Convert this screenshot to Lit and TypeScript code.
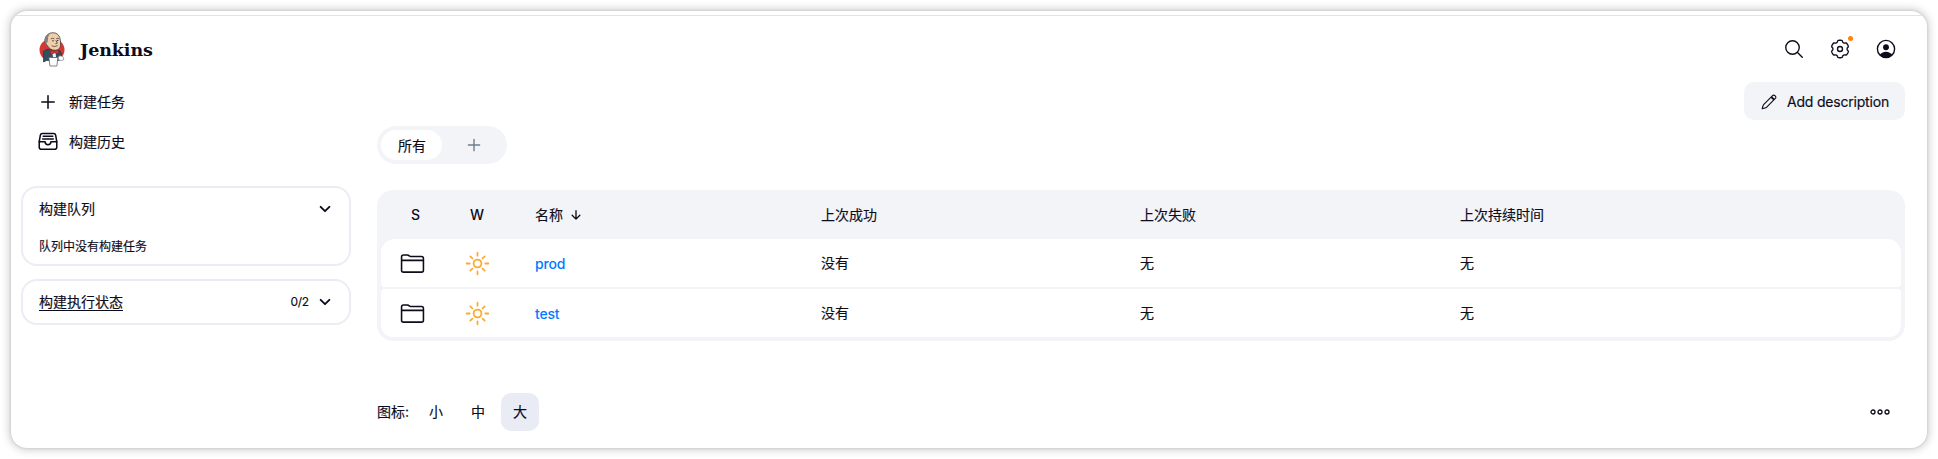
import { LitElement, html, css, svg } from "lit";
import { customElement } from "lit/decorators.js";

const ionicon = (name: string, body: unknown, size = 24) => html`<svg
  class="icon ${name}" width=${size} height=${size} viewBox="0 0 512 512" fill="none"
  stroke="currentColor" stroke-width="32" stroke-linecap="round" stroke-linejoin="round">${body}</svg>`;

const plus = (size: number) => ionicon("plus", svg`<path stroke-width="36" d="M256 112v288M400 256H112"/>`, size);
const chevron = () => ionicon("chevron", svg`<path stroke-width="48" d="M144 200l112 112 112-112"/>`, 20);

const archive = () => ionicon("archive", svg`
  <g stroke-width="36"><path d="M384 56H128c-26 0-46 14-50 40L52 250v128a48.14 48.14 0 0048 48h312a48.14 48.14 0 0048-48V250L434 96c-4-27-24-40-50-40z"/>
  <path d="M52 250h136M324 250h136M188 250a68 68 0 00136 0M144 122h224M132 186h248"/></g>`, 22);

const search = () => ionicon("search", svg`
  <path d="M221 64a157 157 0 10157 157A157 157 0 00221 64z"/><path d="M338 338l110 110"/>`, 22);

/* Six-lobed outline: the radius swells at every 60 degrees, starting from the top. */
const gearOutline = Array.from({ length: 144 }, (_, i) => {
  const angle = (i / 144) * Math.PI * 2;
  const wave = Math.cos(angle * 6);
  const radius = 184 + 20 * Math.tanh((wave + 0.4) * 2.4);
  const x = 256 + radius * Math.sin(angle);
  const y = 256 - radius * Math.cos(angle);
  return `${i ? "L" : "M"}${x.toFixed(1)} ${y.toFixed(1)}`;
}).join("") + "Z";

const gear = () => ionicon("gear", svg`<path d=${gearOutline}/><circle cx="256" cy="256" r="58"/>`, 22);

const person = () => ionicon("person", svg`
  <circle cx="256" cy="256" r="200"/>
  <circle cx="256" cy="216" r="68" fill="currentColor" stroke="none"/>
  <path fill="currentColor" stroke="none" d="M256 464c65 0 117-26 150-66-32-50-88-80-150-80s-118 30-150 80c33 40 85 66 150 66z"/>`, 22);

const pencil = () => ionicon("pencil", svg`
  <path stroke-width="36" d="M338 84L84 338Q72 350 62 388L38 474l86-24q38-10 50-22l254-254M338 84l32-32c22-22 56-20 76 0l14 14c20 20 22 54 0 76l-32 32zM338 84l20 70 70 20"/>`, 16);

const folder = () => ionicon("folder", svg`
  <path d="M440 432H72a40 40 0 01-40-40V120a40 40 0 0140-40h75.9a40 40 0 0122.2 6.700l27.8 18.600a40 40 0 0022.2 6.700H440a40 40 0 0140 40v240a40 40 0 01-40 40zM32 192h448"/>`, 25);

const sun = () => ionicon("sun", svg`
  <path stroke-width="36" stroke-miterlimit="10" d="M256 34v62M256 416v62M403.1 108.900l-42 42M150.900 361.100l-42 42M478 256h-62M96 256H34M403.100 403.100l-42-42M150.900 150.900l-42-42"/>
  <circle cx="256" cy="256" r="80" stroke-width="36"/>`, 25);

const arrowDown = () => ionicon("arrow", svg`<path stroke-width="56" d="M92 268l164 164 164-164M256 412V70"/>`, 12);

const butler = () => html`<svg class="logo" width="26" height="35" viewBox="0 0 26 35">
  <ellipse cx="13" cy="18" rx="12.500" ry="11.500" fill="#d33833"/>
  <path d="M2.500 26Q5.500 30.500 10.500 32h7l4-4z" fill="#fff"/>
  <path d="M4.300 19.500q2.500-2.500 6-2.300l3 2.300 5.500-1.500q3 .5 3.400 3l.8 5.500-3.500 2H7.500l-3 1.500Q4.800 25 4.300 19.500z" fill="#335061" stroke="#24303b" stroke-width=".7"/>
  <path d="M13 19l1.500 2.500L16.500 19l.5 6h-3z" fill="#f3f4f5"/>
  <path d="M5.800 7.500Q7.500.700 14 .700t7.500 8.100v4.500q-.4 4.800-5.200 5-5.600-.2-7.800-4.600-2.800-1.400-2.700-6.200z" fill="#efcfab" stroke="#4a403a" stroke-width=".8"/>
  <path d="M5.900 9.500Q6 3 11 1.200 8.700 4.500 9 8l-.8 2.800-1.200 1.500z" fill="#80807e"/>
  <path d="M12.200 6.700q1.400-1 2.800-.2M17.500 6.500q1.300-.8 2.400.1M17 8.500l1.300 2.700-1.500.4M13 14q2.500 1.400 5.200-.2" fill="none" stroke="#4a403a" stroke-width=".8" stroke-linecap="round"/>
  <circle cx="14" cy="8.700" r=".7" fill="#33302e"/><circle cx="18.700" cy="8.500" r=".7" fill="#33302e"/>
  <path d="M11.300 18l3.700 1.200 4.200-1.400.4 4-4.100-.9-4 1.500z" fill="#d33833" stroke="#7c2020" stroke-width=".5"/>
  <path d="M9.900 25.500h8.900L17.900 34h-7z" fill="#fff" stroke="#606872" stroke-width=".8"/>
  <path d="M19.300 25.500q1-2.500 2.600-1.500 1.800-.5 2.500 1.700l.4 2-2.400.8-3.100-.7z" fill="#fff" stroke="#777b80" stroke-width=".7"/>
</svg>`;

const jobs = [
  { name: "prod", success: "没有", failure: "无", duration: "无" },
  { name: "test", success: "没有", failure: "无", duration: "无" },
];

@customElement("app-root")
export class AppRoot extends LitElement {
  static styles = css`
    :host {
      display: block;
      box-sizing: border-box;
      height: 459px;
      padding: 11px;
      background: #fff;
      color: #0c0c1c;
      font: 14px/20px Inter, "Noto Sans CJK SC", sans-serif;
      -webkit-text-stroke: .15px currentColor;
    }
    * { box-sizing: border-box; }
    svg { display: block; flex: none; }
    .window {
      height: 437px;
      padding-top: 4px;
      border-radius: 16px;
      overflow: hidden;
      background: #fff;
      box-shadow: 0 0 3px rgba(0, 0, 0, .14), 0 0 9px 2px rgba(0, 0, 0, .19);
    }
    .page { height: 433px; border-top: 1px solid #e2e2e2; }
    header { display: flex; align-items: center; height: 66px; padding: 0 30px 0 28px; }
    .brand { display: flex; align-items: center; gap: 15px; }
    .brand-name {
      padding-top: 2px;
      font: bold 17.500px/24px "DejaVu Serif", serif;
      letter-spacing: -.1px;
      -webkit-text-stroke: 0;
    }
    .tools { display: flex; gap: 24px; margin-left: auto; }
    .tool { position: relative; display: grid; place-items: center; width: 22px; height: 22px; }
    .dot { position: absolute; left: 19px; top: -2px; width: 5px; height: 5px; border-radius: 50%; background: #ff820a; }
    .body { display: flex; gap: 26px; padding: 0 22px 0 10px; }
    aside { width: 330px; }
    nav { display: grid; gap: 20px; padding: 10px 0 0 16px; }
    .task { display: flex; align-items: center; gap: 10px; height: 20px; }
    .task .icon { width: 22px; }
    .pane { border: 2px solid #eaedf3; border-radius: 16px; padding: 0 14px 0 16px; }
    .pane-head { display: flex; align-items: center; height: 42px; }
    .pane-head .icon { margin-left: auto; }
    .queue { height: 80px; margin-top: 34px; }
    .queue-text { margin-top: 5px; font-size: 12px; line-height: 24px; }
    .executors { height: 46px; margin-top: 13px; }
    .under { text-decoration: underline; text-underline-offset: 3px; text-decoration-thickness: 1px; }
    .count { margin-left: auto; font-size: 12px; letter-spacing: -.2px; }
    .executors .icon { margin-left: 6px; }
    main { flex: 1; }
    .actions { display: flex; justify-content: flex-end; }
    .button {
      display: flex; align-items: center; gap: 10px; width: 161px; height: 38px;
      padding: 1px 0 0 17px; border-radius: 10px; background: #f3f4f8; white-space: nowrap;
      letter-spacing: -.2px;
    }
    .tabs {
      display: flex; width: 130px; height: 38px; margin-top: 6px; padding: 4px;
      border-radius: 19px; background: #f3f4f8;
    }
    .tab { display: grid; place-items: center; width: 63px; height: 30px; padding: 1px 0 0 1px; border-radius: 15px; }
    .tab.active { background: #fff; }
    .tab.add { color: #6f7d8f; padding: 0 0 0 4px; }
    .table {
      height: 151px; margin-top: 26px; padding: 0 4px 4px; border-radius: 16px; background: #f3f4f8;
    }
    .row { display: grid; grid-template-columns: 69px 54px 31px 286px 319px 320px 1fr; align-items: center; height: 48px; }
    .row.head { height: 49px; }
    .latin { font-weight: 500; -webkit-text-stroke: 0; }
    .cell-center { display: grid; place-items: center; }
    .state { padding-right: 6px; }
    .name { grid-column: 4; display: flex; align-items: center; gap: 7px; }
    .row.job { background: #fff; border-radius: 4px; }
    .row.job.first { border-radius: 14px 14px 4px 4px; }
    .row.job.last { margin-top: 2px; border-radius: 4px 4px 12px 12px; }
    .link { padding-top: 2px; color: #007aff; letter-spacing: -.2px; font-weight: 500; -webkit-text-stroke: 0; }
    .sun { color: #fea92b; }
    .footer { display: flex; align-items: center; height: 38px; margin-top: 52px; padding-right: 14px; }
    .size { display: grid; place-items: center; width: 38px; height: 38px; border-radius: 10px; margin-left: 4px; }
    .size.first { margin-left: 8px; }
    .size.selected { background: #eaecf5; }
    .more { margin-left: auto; }
  `;

  render() {
    return html`<div class="window"><div class="page">
      <header>
        <div class="brand">${butler()}<span class="brand-name">Jenkins</span></div>
        <div class="tools">
          <span class="tool">${search()}</span>
          <span class="tool">${gear()}<i class="dot"></i></span>
          <span class="tool">${person()}</span>
        </div>
      </header>
      <div class="body">
        <aside>
          <nav>
            <span class="task">${plus(24)}<span>新建任务</span></span>
            <span class="task">${archive()}<span>构建历史</span></span>
          </nav>
          <section class="pane queue">
            <div class="pane-head"><span>构建队列</span>${chevron()}</div>
            <div class="queue-text">队列中没有构建任务</div>
          </section>
          <section class="pane executors">
            <div class="pane-head"><span class="under">构建执行状态</span><span class="count">0/2</span>${chevron()}</div>
          </section>
        </aside>
        <main>
          <div class="actions"><span class="button">${pencil()}<span>Add description</span></span></div>
          <div class="tabs"><span class="tab active">所有</span><span class="tab add">${plus(20)}</span></div>
          <div class="table">
            <div class="row head">
              <span class="cell-center latin">S</span><span class="cell-center latin">W</span>
              <span class="name">名称${arrowDown()}</span>
              <span>上次成功</span><span>上次失败</span><span>上次持续时间</span>
            </div>
            ${jobs.map((job, i) => html`<div class="row job ${i === 0 ? "first" : "last"}">
              <span class="cell-center state">${folder()}</span><span class="cell-center">${sun()}</span>
              <span class="name link">${job.name}</span>
              <span>${job.success}</span><span>${job.failure}</span><span>${job.duration}</span>
            </div>`)}
          </div>
          <div class="footer">
            <span>图标:</span>
            <span class="size first">小</span><span class="size">中</span><span class="size selected">大</span>
            <svg class="more" width="22" height="8" viewBox="0 0 22 8" fill="none" stroke="currentColor" stroke-width="1.300">
              <circle cx="4" cy="4" r="2"/><circle cx="11" cy="4" r="2"/><circle cx="18" cy="4" r="2"/>
            </svg>
          </div>
        </main>
      </div>
    </div></div>`;
  }
}
